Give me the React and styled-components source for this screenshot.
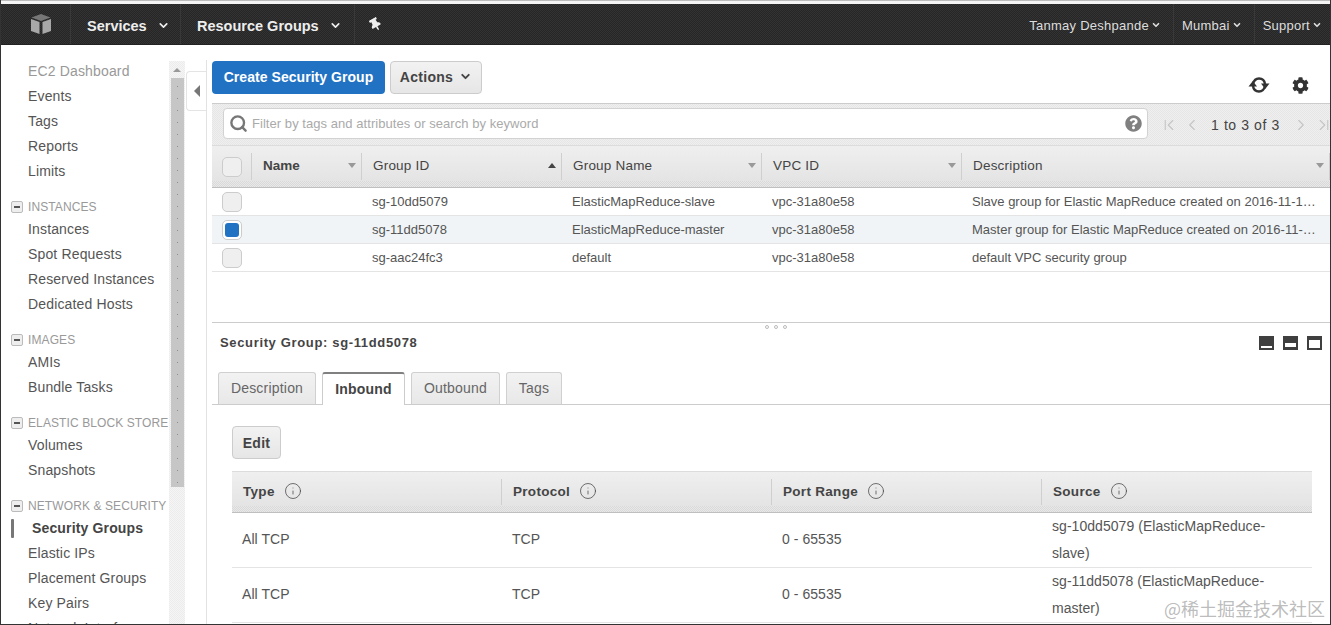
import React from "react";
import styled, { createGlobalStyle } from "styled-components";
import { ChevronDown, ChevronFirst, ChevronLast, ChevronLeft, ChevronRight, Info, Search } from "lucide-react";
import { FaCog, FaQuestionCircle, FaThumbtack } from "react-icons/fa";

const Global = createGlobalStyle`
  html, body { margin: 0; padding: 0; background: #fff; }
  body { font-family: "Liberation Sans", Arial, sans-serif; color: #444; }
  * { box-sizing: border-box; }
`;

const checker = (a, b) => `repeating-conic-gradient(${a} 0 25%, ${b} 0 50%) 0 0 / 2px 2px`;

const Frame = styled.div`
  position: relative;
  width: 1331px;
  height: 625px;
  overflow: hidden;
  display: flex;
  flex-direction: column;
  background: #fff;
  border-left: 1px solid #333;
  border-right: 1px solid #333;
  border-bottom: 1px solid #333;
`;
const TopStrip = styled.div`
  height: 4px;
  flex: none;
  background: #f4f4f4;
  border-top: 1px solid #bbb;
`;
const Nav = styled.header`
  height: 41px;
  flex: none;
  display: flex;
  align-items: stretch;
  background: ${checker("#333", "#262626")};
  color: #f0f0f0;
  border-bottom: 1px solid #222;
`;
const LogoCell = styled.div`
  width: 70px;
  display: flex;
  align-items: center;
  padding-left: 29px;
  border-right: 1px solid #393939;
`;
const NavMain = styled.div`
  display: flex;
  align-items: center;
  gap: 10px;
  padding: 3px 10px 0 16px;
  height: 100%;
  font-weight: 700;
  font-size: 14.5px;
  color: #eee;
  border-right: 1px solid #393939;
  width: ${p => p.$w}px;
  white-space: nowrap;
`;
const PinCell = styled.div`
  display: flex;
  align-items: center;
  padding: 1px 0 0 14px;
  color: #eee;
`;
const NavRight = styled.div`
  margin-left: auto;
  display: flex;
  align-items: stretch;
`;
const NavSmall = styled.div`
  display: flex;
  align-items: center;
  gap: 2px;
  padding: 2px ${p => p.$pr}px 0 8px;
  font-size: 13px;
  letter-spacing: 0.25px;
  color: #ddd;
  white-space: nowrap;
  border-right: ${p => (p.$last ? "none" : "1px solid #393939")};
`;
const Body = styled.div`
  flex: 1;
  min-height: 0;
  display: flex;
`;
const Side = styled.aside`
  width: 168px;
  flex: none;
  padding-top: 14px;
  overflow: hidden;
  font-size: 14px;
`;
const SideItem = styled.div`
  height: 25px;
  line-height: 25px;
  padding-left: ${p => (p.$active ? 31 : 27)}px;
  letter-spacing: 0.15px;
  white-space: nowrap;
  position: relative;
  color: ${p => (p.$muted ? "#999" : p.$active ? "#444" : "#555")};
  font-weight: ${p => (p.$active ? 700 : 400)};
  &::before {
    content: "";
    display: ${p => (p.$active ? "block" : "none")};
    position: absolute;
    left: 10px;
    top: 3px;
    width: 3px;
    height: 19px;
    background: #777;
    border-radius: 1px;
  }
`;
const SideHead = styled.div`
  margin-top: 12px;
  height: 21px;
  display: flex;
  align-items: center;
  font-size: 12px;
  letter-spacing: 0.1px;
  color: #999;
  white-space: nowrap;
  padding-left: 10px;
`;
const Toggle = styled.span`
  width: 12px;
  height: 12px;
  margin-right: 5px;
  flex: none;
  border: 1px solid #bbb;
  border-radius: 2px;
  background: #eee;
  display: flex;
  align-items: center;
  justify-content: center;
  &::after { content: ""; width: 6px; height: 2px; background: #555; }
`;
const Scroll = styled.div`
  width: 16px;
  flex: none;
  margin-top: 16px;
  background: ${checker("#f5f5f5", "#ececec")};
  display: flex;
  flex-direction: column;
  align-items: center;
`;
const ScrollUp = styled.div`
  height: 17px;
  flex: none;
  display: flex;
  align-items: center;
  justify-content: center;
  &::after {
    content: "";
    border-left: 4px solid transparent;
    border-right: 4px solid transparent;
    border-bottom: 4px solid #999;
  }
`;
const ScrollThumb = styled.div`
  width: 13px;
  height: 409px;
  background: linear-gradient(#8f8f8f 1px, transparent 1px) center 8px / 1px 12px repeat-y, #c6c6c6;
`;
const Collapse = styled.div`
  width: 20px;
  flex: none;
  margin-top: 26px;
  height: 40px;
  margin-left: 1px;
  border: 1px solid #e4e4e4;
  border-right: none;
  border-radius: 4px 0 0 4px;
  display: flex;
  align-items: center;
  justify-content: center;
  &::after {
    content: "";
    border-top: 6px solid transparent;
    border-bottom: 6px solid transparent;
    border-right: 6px solid #777;
  }
`;
const Main = styled.main`
  flex: 1;
  min-width: 0;
  margin-top: 15px;
  border-left: 1px solid #e2e2e2;
  padding-left: 5px;
  display: flex;
  flex-direction: column;
`;
const Toolbar = styled.div`
  height: 43px;
  flex: none;
  display: flex;
  align-items: flex-start;
  padding-top: 1px;
  gap: 5px;
`;
const Primary = styled.div`
  width: 173px;
  height: 33px;
  padding-bottom: 2px;
  border-radius: 4px;
  background: #2272c3;
  color: #fff;
  font-weight: 700;
  font-size: 14px;
  letter-spacing: 0.05px;
  display: flex;
  align-items: center;
  justify-content: center;
`;
const Secondary = styled.div`
  height: 33px;
  width: ${p => p.$w}px;
  padding-bottom: ${p => p.$pb}px;
  border: 1px solid #ccc;
  border-radius: 4px;
  background: linear-gradient(#f2f2f2, #e6e6e6);
  color: #444;
  font-weight: 700;
  font-size: 14px;
  letter-spacing: 0.3px;
  display: flex;
  align-items: center;
  justify-content: center;
  gap: 6px;
`;
const ToolIcons = styled.div`
  margin-left: auto;
  display: flex;
  align-items: center;
  gap: 22px;
  padding: 14px 21px 0 0;
  color: #333;
`;
const SearchBand = styled.div`
  height: 42px;
  flex: none;
  border-top: 1px solid #ccc;
  background: ${checker("#efefef", "#e6e6e6")};
  display: flex;
  align-items: center;
  padding-left: 11px;
`;
const SearchBox = styled.div`
  width: 925px;
  height: 31px;
  margin-top: -2px;
  flex: none;
  background: #fff;
  border: 1px solid #d2d2d2;
  border-radius: 4px;
  display: flex;
  align-items: center;
  padding: 0 5px;
  font-size: 13px;
  letter-spacing: 0.05px;
  color: #aaa;
  gap: 4px;
`;
const SearchHelp = styled.span`
  margin-left: auto;
  display: flex;
  color: #808080;
`;
const Pager = styled.div`
  flex: 1;
  display: flex;
  align-items: center;
  padding-left: 12px;
  color: #c4c4c4;
  gap: 5px;
`;
const PagerText = styled.span`
  font-size: 14px;
  letter-spacing: 0.6px;
  color: #444;
  margin: 0 7px 0 5px;
  white-space: nowrap;
`;
const GridHead = styled.div`
  position: relative;
  height: ${p => p.$h}px;
  flex: none;
  display: grid;
  grid-template-columns: ${p => p.$cols};
  align-items: stretch;
  background: linear-gradient(#efefef, #e2e2e2);
  border-bottom: 1px solid #bfbfbf;
  border-top: 1px solid #dcdcdc;
  &::before {
    content: "";
    position: absolute;
    left: 0;
    right: 0;
    bottom: 0;
    height: 6px;
    background: ${checker("#e8e8e8", "#d9d9d9")};
  }
`;
const HeadCell = styled.div`
  position: relative;
  display: flex;
  align-items: center;
  padding: 0 11px ${p => p.$pb}px;
  font-size: 13.5px;
  font-weight: ${p => (p.$bold ? 700 : 400)};
  letter-spacing: ${p => (p.$bold ? "0" : "0.2px")};
  color: #444;
  z-index: 1;
  &::after {
    content: "";
    display: ${p => (p.$last ? "none" : "block")};
    position: absolute;
    right: 0;
    top: 7px;
    bottom: 7px;
    width: 1px;
    background: #cfcfcf;
  }
`;
const HeadCheckCell = styled(HeadCell)`
  padding: 0 0 0 10px;
`;
const Sort = styled.span`
  margin-left: auto;
  margin-right: -5px;
  width: 0;
  height: 0;
  border-left: 4px solid transparent;
  border-right: 4px solid transparent;
  ${p => (p.$up ? "border-bottom: 5px solid #444;" : "border-top: 5px solid #999;")}
`;
const Row = styled.div`
  height: 28px;
  flex: none;
  display: grid;
  grid-template-columns: ${p => p.$cols};
  align-items: center;
  font-size: 13px;
  color: #555;
  background: ${p => (p.$sel ? "#f0f4f6" : "#fff")};
  border-bottom: 1px solid #e4e4e4;
`;
const RowCell = styled.div`
  padding: 0 ${p => (p.$tail ? 12 : 0)}px 0 10px;
  white-space: nowrap;
  overflow: hidden;
  text-overflow: ellipsis;
`;
const CheckCell = styled.div`
  display: flex;
  padding-left: 10px;
`;
const Check = styled.span`
  width: 20px;
  height: 20px;
  border: 1px solid #ccc;
  border-radius: 5px;
  background: ${p => (p.$on ? "#fff" : "#efefef")};
  display: flex;
  align-items: center;
  justify-content: center;
  &::after {
    content: "";
    display: ${p => (p.$on ? "block" : "none")};
    width: 14px;
    height: 14px;
    border-radius: 3px;
    background: #2272c3;
  }
`;
const Blank = styled.div`
  height: 50px;
  flex: none;
`;
const Detail = styled.section`
  flex: 1;
  min-height: 0;
  position: relative;
  border-top: 1px solid #ccc;
`;
const Grip = styled.div`
  position: absolute;
  left: 553px;
  top: 2px;
  display: flex;
  gap: 5px;
`;
const GripDot = styled.span`
  width: 4px;
  height: 4px;
  border-radius: 50%;
  border: 1px solid #bbb;
`;
const DetailHead = styled.div`
  height: 39px;
  display: flex;
  align-items: center;
  justify-content: space-between;
  padding: 0 8px;
  font-size: 13px;
  font-weight: 700;
  letter-spacing: 0.65px;
  color: #444;
`;
const ViewIcons = styled.div`
  display: flex;
  gap: 9px;
`;
const TabBar = styled.div`
  margin-top: 10px;
  height: 33px;
  display: flex;
  align-items: flex-end;
  gap: 6px;
  padding-left: 6px;
  border-bottom: 1px solid #ccc;
`;
const Tab = styled.div`
  height: ${p => (p.$on ? 33 : 32)}px;
  width: ${p => p.$w}px;
  padding-bottom: 2px;
  display: flex;
  align-items: center;
  justify-content: center;
  font-size: 14px;
  letter-spacing: 0.2px;
  font-weight: ${p => (p.$on ? 700 : 400)};
  color: ${p => (p.$on ? "#444" : "#666")};
  border: 1px solid ${p => (p.$on ? "#ccc" : "#d0d0d0")};
  border-top: ${p => (p.$on ? "2px solid #808080" : "1px solid #d0d0d0")};
  border-bottom: none;
  border-radius: 3px 3px 0 0;
  background: ${p => (p.$on ? "#fff" : "linear-gradient(#f2f2f2, #e8e8e8)")};
  margin-bottom: ${p => (p.$on ? "-1px" : "0")};
`;
const TabBody = styled.div`
  padding: 21px 18px 0 20px;
`;
const InnerHead = styled.div`
  margin-top: 12px;
`;
const InfoLabel = styled.span`
  display: flex;
  align-items: center;
  gap: 9px;
  letter-spacing: 0.3px;
  color: #444;
`;
const InnerRow = styled.div`
  height: 55px;
  display: grid;
  grid-template-columns: repeat(4, 270px);
  align-items: center;
  font-size: 14px;
  letter-spacing: 0.05px;
  color: #555;
  border-bottom: 1px solid #e4e4e4;
`;
const InnerCell = styled.div`
  padding: 0 0 ${p => (p.$single ? 2 : 0)}px 10px;
  line-height: 27px;
  white-space: nowrap;
`;
const Watermark = styled.div`
  position: absolute;
  right: 5px;
  bottom: 4px;
  font-family: "Noto Sans CJK SC", sans-serif;
  font-size: 18px;
  line-height: 24px;
  color: rgba(150, 150, 150, 0.65);
  white-space: nowrap;
`;

const Cube = () => (
  <svg width="22" height="22" viewBox="0 0 22 22">
    <path d="M11 1 20.5 4.5 11 8 1.5 4.5Z" fill="#777" />
    <path d="M1 6 9.5 9V21L1 18Z" fill="#a8a8a8" />
    <path d="M21 6 12.5 9V21L21 18Z" fill="#a8a8a8" />
  </svg>
);
const Refresh = () => (
  <svg width="22" height="20" viewBox="0 0 22 20">
    <path d="M5 9C6 5 8.500 3.500 11 3.500 14 3.500 16.500 5.500 17 9" fill="none" stroke="#333" strokeWidth="2.400" />
    <path d="M17 11C16 15 13.500 16.500 11 16.500 8 16.500 5.500 14.500 5 11" fill="none" stroke="#333" strokeWidth="2.400" />
    <path d="M13 8.500H21.500L17.200 14Z" fill="#333" />
    <path d="M.5 11.500H9L4.800 6Z" fill="#333" />
  </svg>
);
const ViewIcon = ({ y, h }) => (
  <svg width="15" height="14" viewBox="0 0 15 14">
    <rect width="15" height="14" fill="#3f3f3f" />
    <rect x="2" y={y} width="11" height={h} fill="#fff" />
  </svg>
);

const topCols = "40px 110px 200px 200px 200px 1fr";
const innerCols = "repeat(4, 270px)";

const sideGroups = [
  { items: [["EC2 Dashboard", "muted"], ["Events"], ["Tags"], ["Reports"], ["Limits"]] },
  { head: "INSTANCES", items: [["Instances"], ["Spot Requests"], ["Reserved Instances"], ["Dedicated Hosts"]] },
  { head: "IMAGES", items: [["AMIs"], ["Bundle Tasks"]] },
  { head: "ELASTIC BLOCK STORE", items: [["Volumes"], ["Snapshots"]] },
  { head: "NETWORK & SECURITY", items: [["Security Groups", "active"], ["Elastic IPs"], ["Placement Groups"], ["Key Pairs"], ["Network Interfaces"]] },
];

const rows = [
  ["sg-10dd5079", "ElasticMapReduce-slave", "vpc-31a80e58", "Slave group for Elastic MapReduce created on 2016-11-14T10:12:40.000Z"],
  ["sg-11dd5078", "ElasticMapReduce-master", "vpc-31a80e58", "Master group for Elastic MapReduce created on 2016-11-14T10:12:40.000Z", true],
  ["sg-aac24fc3", "default", "vpc-31a80e58", "default VPC security group"],
];

export default function App() {
  return (
    <Frame>
      <Global />
      <TopStrip />
      <Nav>
        <LogoCell><Cube /></LogoCell>
        <NavMain $w={110}>Services <ChevronDown size={13} strokeWidth={3} /></NavMain>
        <NavMain $w={174}>Resource Groups <ChevronDown size={13} strokeWidth={3} /></NavMain>
        <PinCell><FaThumbtack size={13} style={{ transform: "rotate(-30deg)" }} /></PinCell>
        <NavRight>
          <NavSmall $pr={12}>Tanmay Deshpande <ChevronDown size={10} strokeWidth={4} /></NavSmall>
          <NavSmall $pr={12}>Mumbai <ChevronDown size={10} strokeWidth={4} /></NavSmall>
          <NavSmall $pr={8} $last>Support <ChevronDown size={10} strokeWidth={4} /></NavSmall>
        </NavRight>
      </Nav>
      <Body>
        <Side>
          {sideGroups.map((g, i) => (
            <div key={i}>
              {g.head && <SideHead><Toggle />{g.head}</SideHead>}
              {g.items.map(([t, k]) => (
                <SideItem key={t} $muted={k === "muted"} $active={k === "active"}>{t}</SideItem>
              ))}
            </div>
          ))}
        </Side>
        <Scroll><ScrollUp /><ScrollThumb /></Scroll>
        <Collapse />
        <Main>
          <Toolbar>
            <Primary>Create Security Group</Primary>
            <Secondary $w={92} $pb={2}>Actions <ChevronDown size={13} strokeWidth={3.5} /></Secondary>
            <ToolIcons>
              <Refresh />
              <FaCog size={17} />
            </ToolIcons>
          </Toolbar>
          <SearchBand>
            <SearchBox>
              <Search size={19} color="#777" strokeWidth={3} />
              Filter by tags and attributes or search by keyword
              <SearchHelp><FaQuestionCircle size={17} /></SearchHelp>
            </SearchBox>
            <Pager>
              <ChevronFirst size={18} strokeWidth={1.5} />
              <ChevronLeft size={18} strokeWidth={1.5} />
              <PagerText>1 to 3 of 3</PagerText>
              <ChevronRight size={18} strokeWidth={1.5} />
              <ChevronLast size={18} strokeWidth={1.5} />
            </Pager>
          </SearchBand>
          <GridHead $cols={topCols} $h={43}>
            <HeadCheckCell><Check /></HeadCheckCell>
            <HeadCell $bold $pb={3}>Name<Sort /></HeadCell>
            <HeadCell $pb={3}>Group ID<Sort $up /></HeadCell>
            <HeadCell $pb={3}>Group Name<Sort /></HeadCell>
            <HeadCell $pb={3}>VPC ID<Sort /></HeadCell>
            <HeadCell $pb={3}>Description<Sort /></HeadCell>
          </GridHead>
          {rows.map(r => (
            <Row key={r[0]} $cols={topCols} $sel={r[4]}>
              <CheckCell><Check $on={r[4]} /></CheckCell>
              <RowCell />
              <RowCell>{r[0]}</RowCell>
              <RowCell>{r[1]}</RowCell>
              <RowCell>{r[2]}</RowCell>
              <RowCell $tail>{r[3]}</RowCell>
            </Row>
          ))}
          <Blank />
          <Detail>
            <Grip><GripDot /><GripDot /><GripDot /></Grip>
            <DetailHead>
              Security Group: sg-11dd5078
              <ViewIcons>
                <ViewIcon y={10} h={2} />
                <ViewIcon y={7} h={4} />
                <ViewIcon y={4} h={8} />
              </ViewIcons>
            </DetailHead>
            <TabBar>
              <Tab $w={98}>Description</Tab>
              <Tab $w={83} $on>Inbound</Tab>
              <Tab $w={89}>Outbound</Tab>
              <Tab $w={56}>Tags</Tab>
            </TabBar>
            <TabBody>
              <Secondary $w={49} $pb={0}>Edit</Secondary>
              <InnerHead>
                <GridHead $cols={innerCols} $h={42}>
                  {["Type", "Protocol", "Port Range", "Source"].map((h, i) => (
                    <HeadCell key={h} $bold $pb={2} $last={i === 3}>
                      <InfoLabel>{h}<Info size={18} strokeWidth={1} /></InfoLabel>
                    </HeadCell>
                  ))}
                </GridHead>
              </InnerHead>
              <InnerRow>
                <InnerCell $single>All TCP</InnerCell><InnerCell $single>TCP</InnerCell><InnerCell $single>0 - 65535</InnerCell>
                <InnerCell>sg-10dd5079 (ElasticMapReduce-<br />slave)</InnerCell>
              </InnerRow>
              <InnerRow>
                <InnerCell $single>All TCP</InnerCell><InnerCell $single>TCP</InnerCell><InnerCell $single>0 - 65535</InnerCell>
                <InnerCell>sg-11dd5078 (ElasticMapReduce-<br />master)</InnerCell>
              </InnerRow>
            </TabBody>
          </Detail>
        </Main>
      </Body>
      <Watermark>@稀土掘金技术社区</Watermark>
    </Frame>
  );
}
